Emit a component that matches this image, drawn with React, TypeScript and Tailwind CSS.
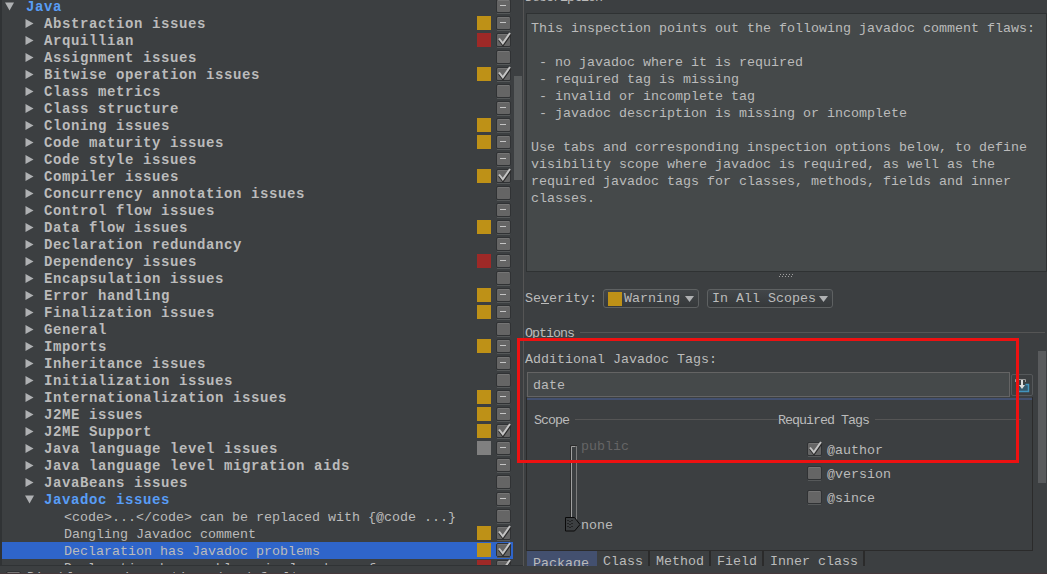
import clsx from "clsx";

type Check = "on" | "off" | "mixed";

type Row = {
  label: string;
  level: 0 | 1 | 2;
  check: Check;
  severity?: "warning" | "error" | "info";
  open?: boolean;
  selected?: boolean;
};

const rows: Row[] = [
  { label: "Java", level: 0, check: "mixed", open: true },
  { label: "Abstraction issues", level: 1, check: "mixed", severity: "warning" },
  { label: "Arquillian", level: 1, check: "on", severity: "error" },
  { label: "Assignment issues", level: 1, check: "off" },
  { label: "Bitwise operation issues", level: 1, check: "on", severity: "warning" },
  { label: "Class metrics", level: 1, check: "off" },
  { label: "Class structure", level: 1, check: "mixed" },
  { label: "Cloning issues", level: 1, check: "mixed", severity: "warning" },
  { label: "Code maturity issues", level: 1, check: "mixed", severity: "warning" },
  { label: "Code style issues", level: 1, check: "mixed" },
  { label: "Compiler issues", level: 1, check: "on", severity: "warning" },
  { label: "Concurrency annotation issues", level: 1, check: "off" },
  { label: "Control flow issues", level: 1, check: "mixed" },
  { label: "Data flow issues", level: 1, check: "mixed", severity: "warning" },
  { label: "Declaration redundancy", level: 1, check: "mixed" },
  { label: "Dependency issues", level: 1, check: "mixed", severity: "error" },
  { label: "Encapsulation issues", level: 1, check: "off" },
  { label: "Error handling", level: 1, check: "mixed", severity: "warning" },
  { label: "Finalization issues", level: 1, check: "mixed", severity: "warning" },
  { label: "General", level: 1, check: "off" },
  { label: "Imports", level: 1, check: "mixed", severity: "warning" },
  { label: "Inheritance issues", level: 1, check: "mixed" },
  { label: "Initialization issues", level: 1, check: "off" },
  { label: "Internationalization issues", level: 1, check: "mixed", severity: "warning" },
  { label: "J2ME issues", level: 1, check: "mixed", severity: "warning" },
  { label: "J2ME Support", level: 1, check: "on", severity: "warning" },
  { label: "Java language level issues", level: 1, check: "mixed", severity: "info" },
  { label: "Java language level migration aids", level: 1, check: "mixed" },
  { label: "JavaBeans issues", level: 1, check: "off" },
  { label: "Javadoc issues", level: 1, check: "mixed", open: true },
  { label: "<code>...</code> can be replaced with {@code ...}", level: 2, check: "off" },
  { label: "Dangling Javadoc comment", level: 2, check: "on", severity: "warning" },
  { label: "Declaration has Javadoc problems", level: 2, check: "on", severity: "warning", selected: true },
  { label: "Declaration has problems in Javadoc references", level: 2, check: "on", severity: "error" },
];

const description = `This inspection points out the following javadoc comment flaws:

 - no javadoc where it is required
 - required tag is missing
 - invalid or incomplete tag
 - javadoc description is missing or incomplete

Use tabs and corresponding inspection options below, to define
visibility scope where javadoc is required, as well as the
required javadoc tags for classes, methods, fields and inner
classes.`;

function Checkbox({ state }: { state: Check }) {
  return (
    <svg width="17" height="17" viewBox="0 1 17 17" className="shrink-0 overflow-visible">
      <rect x="1.5" y="2.5" width="14" height="13" rx="1.5" fill="none" stroke="#303234" />
      <path d="M2 16.5h13" stroke="#56595a" />
      <rect x="2" y="3" width="13" height="12" rx="1" fill="#656565" />
      <path d="M3 3.5h11" stroke="#757575" />
      {state === "mixed" && <path d="M5 8.5h6" stroke="#c4c4c4" />}
      {state === "on" && (
        <>
          <path d="M4 9l4 5L15.5 3.5" fill="none" stroke="#2b2b2b" strokeWidth="2" />
          <path d="M4 7.500l3.800 4.800L15 2" fill="none" stroke="#c4c4c4" strokeWidth="2" />
        </>
      )}
    </svg>
  );
}

function TreeArrow({ open }: { open?: boolean }) {
  return (
    <svg width="9" height="9" viewBox="0 0 9 9" className="shrink-0 fill-[#afb1b3]">
      {open ? <path d="M0 0.5h9L4.5 8.5z" /> : <path d="M0.5 0v9L8.5 4.5z" />}
    </svg>
  );
}

function TreeRow({ row }: { row: Row }) {
  return (
    <li
      className={clsx(
        "flex h-[17px] shrink-0 items-center",
        row.level === 0 && "pl-[3px]",
        row.level === 1 && "pl-[23px]",
        row.level === 2 && "pl-[62px]",
        row.selected && "bg-[#2f65ca]",
      )}
    >
      {row.level < 2 && <TreeArrow open={row.open} />}
      <span
        className={clsx(
          "flex-1 pt-[2px] leading-[17px] whitespace-pre",
          row.level < 2 && "text-[14px] font-bold tracking-[0.6px]",
          row.level === 0 && "pl-[12px]",
          row.level === 1 && "pl-[10px]",
          row.open && "text-[#589df6]",
        )}
      >
        {row.label}
      </span>
      {row.severity && (
        <span
          className={clsx(
            "mr-[4px] mb-px size-[14px]",
            row.severity === "warning" && "bg-[#be9117]",
            row.severity === "error" && "bg-[#9e2927]",
            row.severity === "info" && "bg-[#808080]",
          )}
        />
      )}
      <Checkbox state={row.check} />
      <span className="w-px" />
    </li>
  );
}

function Combo({ label, swatch }: { label: string; swatch?: boolean }) {
  return (
    <button className="flex h-[19px] items-center rounded-[3px] border border-[#5e6162] bg-linear-to-b from-[#424649] to-[#36393b] px-[4px]">
      {swatch && <span className="mr-[2px] size-[14px] bg-[#be9117]" />}
      <span className="whitespace-pre">{label}</span>
      <svg width="9" height="6" viewBox="0 0 9 6" className={clsx("fill-[#afb1b3]", swatch ? "ml-[5px]" : "ml-[3px]")}>
        <path d="M0 0h9L4.5 6z" />
      </svg>
    </button>
  );
}

function Legend({ children, className }: { children: string; className?: string }) {
  return (
    <div className={clsx("flex h-4 items-center gap-[6px]", className)}>
      <span className="pt-[2px] tracking-[-1px]">{children}</span>
      <span className="mb-px h-px flex-1 bg-[#555555]" />
    </div>
  );
}

function Tag({ label, checked }: { label: string; checked?: boolean }) {
  return (
    <label className="flex h-6 items-center gap-[4px]">
      <Checkbox state={checked ? "on" : "off"} />
      <span className="pt-[3px]">{label}</span>
    </label>
  );
}

function ScopeSlider() {
  return (
    <div className="mt-[10px] ml-[31px] flex h-[96px]">
      <svg width="16" height="96" viewBox="0 0 16 96">
        <path d="M5.5 82V7.5h6V82" fill="none" stroke="#2b2b2b" />
        <path d="M6.5 82V8.5h4" fill="none" stroke="#a0a0a0" />
        <path d="M11.5 8v74" stroke="#7c7c7c" />
        <path d="M0.5 79.500h9l5.500 7-5.500 6.500h-9z" fill="#3c3f41" stroke="#0a0a0a" />
        <path d="M3 82v9M5 83v9M7 82v9" stroke="#0a0a0a" strokeDasharray="1 2" />
      </svg>
      <div className="flex flex-col justify-between pt-px leading-4">
        <span className="text-[#656565]">public</span>
        <span>none</span>
      </div>
    </div>
  );
}

function InspectionTree() {
  return (
    <section className="flex w-[524px] shrink-0 flex-col border-r border-[#555555]">
      <div className="flex h-[566px] border-b border-l-2 border-[#303335]">
        <ul className="-mt-[2px] flex w-[511px] shrink-0 flex-col overflow-hidden">
          {rows.map((row) => (
            <TreeRow key={row.label} row={row} />
          ))}
        </ul>
        <div className="flex-1 pl-px">
          <div className="mt-[76px] h-[104px] w-[8px] bg-[#595c5d]" />
        </div>
      </div>
    </section>
  );
}

function OptionsPanel() {
  return (
    <div className="flex flex-1 flex-col pt-px">
      <Legend className="-mt-px w-[520px]">Options</Legend>
      <p className="mt-[11px] h-4 leading-4">Additional Javadoc Tags:</p>
      <div className="mt-[4px] ml-[2px] flex items-center gap-px">
        <div className="flex h-[25px] w-[483px] items-center border border-[#646464] bg-[#45494a] pt-[3px] pl-[5px]">
          date
        </div>
        <button className="flex h-[22px] w-[22px] items-center justify-center rounded-[2px] border border-[#55585a]">
          <svg width="16" height="16" viewBox="0 0 16 16">
            <path d="M1.500 5V2.500h10V5" fill="none" stroke="#9a9a9a" />
            <path d="M11.500 7.500h3v7h-11v-3" fill="#35586b" stroke="#4394bd" strokeWidth="1.500" />
            <path d="M7 3h2v5h2l-3 4-3-4h2z" fill="#dcdcdc" />
          </svg>
        </button>
      </div>
      <div className="ml-px flex h-[154px] w-[507px] shrink-0 flex-col border border-t-0 border-[#2b2b2b]">
        <div className="mt-px h-[2px] shrink-0 bg-[#43506f]" />
        <div className="flex pt-[12px] pl-[7px]">
          <div className="w-[244px]">
            <Legend>Scope</Legend>
            <ScopeSlider />
          </div>
          <div className="w-[243px]">
            <Legend>Required Tags</Legend>
            <div className="mt-[9px] ml-[28px] flex flex-col">
              <Tag label="@author" checked />
              <Tag label="@version" />
              <Tag label="@since" />
            </div>
          </div>
        </div>
      </div>
      <div className="ml-[2px] flex h-[15px] shrink-0 overflow-hidden leading-[22px]">
        <span className="w-[70px] bg-[#43506f] pt-[2px] pl-[6px]">Package</span>
        {["Class", "Method", "Field", "Inner class"].map((tab) => (
          <span key={tab} className="border-r-2 border-[#2b2b2b] pr-[5px] pl-[6px] whitespace-pre">
            {tab}
          </span>
        ))}
      </div>
    </div>
  );
}

export default function App() {
  return (
    <main className="relative flex h-[574px] w-[1047px] flex-col overflow-hidden bg-[#3c3f41] font-['Liberation_Mono',monospace] text-[13.333px] text-[#bbbbbb]">
      <div className="flex h-[566px] shrink-0">
        <InspectionTree />
        <section className="flex flex-1 flex-col overflow-hidden pl-px">
          <h2 className="-mt-[10px] h-[23px] leading-4 tracking-[-1px]">Description</h2>
          <p className="ml-px h-[259px] w-[521px] shrink-0 border border-[#2f3233] bg-[#45494a] pt-[6px] pl-[4px] leading-[17px] whitespace-pre">
            {description}
          </p>
          <div className="flex h-[6px] shrink-0 items-end justify-center">
            <svg width="15" height="4" viewBox="0 0 15 4">
              <path d="M1 .5h14M0 2.500h14" stroke="#a0a0a0" strokeDasharray="1 2" />
            </svg>
          </div>
          <div className="mt-[11px] flex h-[19px] shrink-0 items-center">
            <span className="w-[78px] pt-px">
              Se<u>v</u>erity:
            </span>
            <Combo label="Warning" swatch />
            <span className="w-2" />
            <Combo label="In All Scopes" />
          </div>
          <div className="mt-[17px] flex flex-1">
            <OptionsPanel />
            <div className="mt-[26px] mr-px -ml-[8px] h-[132px] w-[8px] bg-[#595b5d]" />
          </div>
        </section>
      </div>
      <footer className="flex h-[8px] items-start overflow-hidden border-b border-[#45383b] pt-[4px] pl-[5px]">
        <Checkbox state="off" />
        <span className="pl-[5px] leading-4">Disable new inspections by default</span>
      </footer>
      <div className="absolute top-[338px] left-[517px] h-[125px] w-[502px] border-[3px] border-[#ee1111]" />
    </main>
  );
}
